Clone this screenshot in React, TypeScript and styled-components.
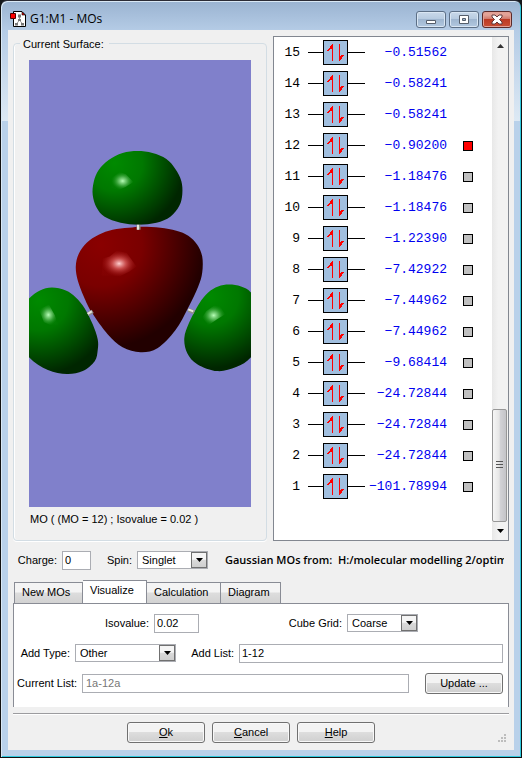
import React from "react";
import styled, { createGlobalStyle, css } from "styled-components";

const GlobalStyle = createGlobalStyle`
  * { box-sizing: border-box; }
  html, body { margin: 0; background: #15181c; }
  body, button, input, select { font: 11px/14px "Liberation Sans", Arial, sans-serif; color: #000; }
`;

const Frame = styled.div`
  display: flex;
  flex-direction: column;
  min-height: 100vh;
  padding: 1px 7px 7px;
  border: 1px solid #111;
  border-top-color: #2b2b35;
  border-radius: 7px 7px 0 0;
  background: linear-gradient(#9ab3d1 0, #b5cce6 30px, #dde9f4 120px, #b9d1ea 120px);
  box-shadow: inset 1px 1px 0 #d9e8f5, inset -1px -1px 0 #2ec9dd;
`;

const TitleBar = styled.header`
  display: flex;
  align-items: center;
  height: 28px;
  padding: 6px 2px 0 2px;
`;

const Title = styled.h1`
  flex: 1;
  margin: 0 0 0 4px;
  font: 12px/16px "Open Sans", "Noto Sans", sans-serif;
`;

const CaptionButtons = styled.div`
  display: flex;
  gap: 3px;
`;

const CaptionButton = styled.button<{ $close?: boolean }>`
  display: grid;
  place-items: center;
  width: 30px;
  height: 17px;
  padding: 0;
  border: 1px solid ${(p) => (p.$close ? "#5b2a2a" : "#5c6f86")};
  border-radius: 3px;
  background: ${(p) =>
    p.$close
      ? "linear-gradient(#e3a398 0 20%, #cf7668 48%, #bc3a24 50%, #c94e35 100%)"
      : "linear-gradient(#c9d9ea, #b6cae0 48%, #9fb6d0 50%, #b2c8e0)"};
  box-shadow: inset 0 0 0 1px ${(p) => (p.$close ? "#e2a196" : "#d9e6f3")};
`;

const Body = styled.main`
  flex: 1;
  display: flex;
  flex-direction: column;
  min-width: 0;
  padding: 6px 5px 7px;
  background: #f0f0f0;
`;

const Panels = styled.div`
  flex: 1;
  display: grid;
  grid-template-columns: 254fr 236fr;
  gap: 6px;
`;

const Group = styled.fieldset`
  display: flex;
  flex-direction: column;
  min-width: 0;
  margin: 0;
  padding: 9px 15px 0;
  border: 1px solid #d3dde4;
  border-radius: 4px;
  box-shadow: inset 1px 0 0 #fff, 0 1px 0 #fff;
`;

const Legend = styled.legend`
  margin-left: -9px;
  padding: 1px 5px 0 3px;
`;

const Viewport = styled.div`
  flex: 1;
  display: flex;
  background: #8080cb;
  svg { flex: 1; width: 100%; }
`;

const Caption = styled.p`
  margin: 0;
  padding: 5px 0 14px 1px;
  white-space: nowrap;
`;

const OrbitalPanel = styled.section`
  display: flex;
  border: 1px solid #828790;
  background: #fff;
`;

const OrbitalList = styled.ul`
  flex: 1;
  margin: 0;
  padding: 0;
  list-style: none;
  font: 13px/31px "Liberation Mono", monospace;
`;

const OrbitalRow = styled.li`
  display: grid;
  grid-template-columns: 26px 65px 82px 25px;
  align-items: center;
  height: 31px;
  text-align: right;
`;

const Level = styled.span`
  display: flex;
  align-items: center;
  margin-left: 8px;
  &::before, &::after { content: ""; flex: 0 0 15px; height: 1px; background: #000; }
  &::after { flex-basis: 17px; }
`;

const SpinBox = styled.span`
  flex: 0 0 25px;
  height: 25px;
  border: 1px solid #000;
  background: #a1bfdf;
  svg { display: block; }
`;

const Energy = styled.span`
  color: #0000f0;
  white-space: nowrap;
`;

const SurfaceMark = styled.button<{ $active: boolean }>`
  width: 10px;
  height: 10px;
  margin-left: 16px;
  padding: 0;
  border: 1px solid #000;
  background: ${(p) => (p.$active ? "#ff0000" : "#c0c0c0")};
`;

const ScrollBar = styled.div`
  display: flex;
  flex-direction: column;
  width: 16px;
  background: linear-gradient(90deg, #e8e8e8, #f2f2f2 40%);
`;

const ScrollButton = styled.button`
  display: grid;
  place-items: center;
  height: 18px;
  padding: 0;
  border: 0;
  background: none;
`;

const ScrollSpace = styled.div`
  flex: 356;
`;

const ScrollThumb = styled.div`
  flex: 111;
  display: grid;
  place-items: center;
  margin-right: 1px;
  border: 1px solid #979797;
  border-radius: 2px;
  background: linear-gradient(90deg, #f6f6f6, #e6e6e6 48%, #d2d2d6 55%, #c4c4c8);
`;

const Line = styled.div<{ $gap?: number }>`
  display: flex;
  align-items: center;
  height: 20px;
  gap: ${(p) => p.$gap ?? 0}px;
`;

const StatusLine = styled(Line)`
  margin-top: 9px;
`;

const Field = styled.div<{ $grow?: boolean }>`
  display: flex;
  align-items: center;
  min-width: 0;
  ${(p) => p.$grow && css`flex: 1;`}
`;

const Label = styled.label<{ $w: number }>`
  flex: 0 0 ${(p) => p.$w}px;
  padding-right: 5px;
  text-align: right;
  white-space: nowrap;
`;

const TextBox = styled.input<{ $w?: number }>`
  ${(p) => (p.$w ? css`width: ${p.$w}px;` : css`flex: 1; min-width: 0;`)}
  height: 19px;
  padding: 0 2px;
  border: 1px solid #abadb3;
  border-radius: 0;
  background: #fff;
  &:disabled { color: #777; padding-left: 3px; }
`;

const SelectBox = styled.div<{ $w: number }>`
  display: flex;
  width: ${(p) => p.$w}px;
  height: 18px;
  border: 1px solid #abadb3;
  background: #fff;
  select {
    flex: 1;
    min-width: 0;
    padding: 0 0 1px 4px;
    border: 0;
    background: none;
    appearance: none;
  }
`;

const DropMark = styled.span`
  display: grid;
  place-items: center;
  width: 16px;
  border: 1px solid #707070;
  background: linear-gradient(#f5f5f5 0 45%, #dadada 50%, #cfcfcf);
  pointer-events: none;
`;

const Source = styled.p`
  flex: 1;
  min-width: 0;
  margin: 0 5px 0 17px;
  overflow: hidden;
  font: 600 11px/18px "Open Sans", "Noto Sans", sans-serif;
  white-space: pre;
`;

const Tabs = styled.div`
  display: flex;
  align-items: flex-end;
  margin: 10px 0 -1px 1px;
`;

const Tab = styled.button<{ $active?: boolean; $w: number }>`
  width: ${(p) => p.$w}px;
  height: 22px;
  padding: 0 0 2px 7px;
  text-align: left;
  border: 1px solid #898c95;
  border-left-width: 0;
  background: linear-gradient(#f4f4f4 0 45%, #dddddd 50%, #d2d2d2);
  &:first-child { border-left-width: 1px; }
  ${(p) =>
    p.$active &&
    css`
      height: 24px;
      padding-bottom: 4px;
      border-bottom-color: #fff;
      background: #fff;
    `}
`;

const TabPane = styled.div`
  display: flex;
  flex-direction: column;
  gap: 10px;
  height: 104px;
  padding: 9px 5px 0 2px;
  border: 1px solid #898c95;
  border-bottom: 0;
  background: #fff;
`;

const Footer = styled.footer`
  display: flex;
  align-items: flex-start;
  gap: 7px;
  margin-top: 6px;
  padding: 8px 0 0 23%;
  border-top: 1px solid #9c9c9f;
  box-shadow: inset 0 1px 0 #fff;
`;

const PushButton = styled.button`
  flex: 0 0 78px;
  height: 21px;
  padding: 0 0 1px;
  border: 1px solid #707070;
  border-radius: 3px;
  background: linear-gradient(#f3f3f3 0 48%, #dddddd 50%, #cfcfcf);
  box-shadow: inset 0 0 0 1px #f8f8f8;
`;

const ResizeGrip = styled.div`
  flex: 1;
  display: flex;
  justify-content: flex-end;
  align-self: flex-end;
  padding-right: 2px;
`;

type Point = [number, number];

/** Closed Catmull-Rom curve through the points, as a cubic Bézier path. */
function blob(points: Point[]): string {
  const n = points.length;
  const at = (i: number) => points[(i + n) % n];
  const parts = points.map((p, i) => {
    const before = at(i - 1);
    const next = at(i + 1);
    const after = at(i + 2);
    return `C${p[0] + (next[0] - before[0]) / 6} ${p[1] + (next[1] - before[1]) / 6} ${
      next[0] - (after[0] - p[0]) / 6
    } ${next[1] - (after[1] - p[1]) / 6} ${next[0]} ${next[1]}`;
  });
  return `M${points[0].join(" ")}${parts.join("")}Z`;
}

const topLobe = blob([[109, 90], [94, 92], [80, 99], [70, 109], [65, 121], [64, 134], [68, 147], [76, 156], [92, 162], [110, 164], [128, 162], [142, 156], [151, 145], [154, 133], [153, 120], [147, 108], [138, 98], [124, 92]]);
const core = blob([[114, 166], [100, 167], [84, 169], [70, 174], [58, 182], [50, 193], [47, 206], [49, 220], [55, 236], [63, 252], [79, 274], [94, 287], [112, 292], [129, 288], [147, 270], [160, 247], [170, 226], [174, 212], [174, 196], [169, 184], [160, 175], [148, 170], [132, 167]]);
const leftLobe = blob([[23, 227], [37, 230], [47, 237], [56, 248], [64, 264], [69, 279], [69, 290], [66, 301], [54, 311], [38, 314], [19, 310], [0, 297], [-12, 275], [-12, 252], [0, 238], [11, 230]]);
const rightLobe = blob([[201, 224], [190, 226], [180, 232], [171, 243], [161, 262], [156, 278], [159, 293], [169, 304], [189, 311], [208, 307], [223, 297], [234, 278], [234, 250], [223, 232], [213, 226]]);

const Shade = ({ id, cx, cy, r, tone }: { id: string; cx: number; cy: number; r: number; tone: string[] }) => (
  <radialGradient id={id} gradientUnits="userSpaceOnUse" cx={cx} cy={cy} r={r}>
    <stop offset="0" stopColor={tone[0]} />
    <stop offset="0.4" stopColor={tone[1]} />
    <stop offset="0.7" stopColor={tone[2]} />
    <stop offset="1" stopColor={tone[3]} />
  </radialGradient>
);

const GREEN = ["#008a00", "#007800", "#004f00", "#002600"];
const RED = ["#8a0000", "#7a0000", "#4e0000", "#220000"];

const Molecule = () => (
  <svg viewBox="0 0 223 446" role="img" aria-label="Molecular orbital surface">
    <defs>
      <Shade id="top" cx={86} cy={102} r={70} tone={GREEN} />
      <Shade id="left" cx={10} cy={240} r={74} tone={GREEN} />
      <Shade id="right" cx={182} cy={236} r={72} tone={GREEN} />
      <Shade id="core" cx={72} cy={184} r={104} tone={RED} />
      <radialGradient id="glint">
        <stop offset="0" stopColor="#b8ffb8" />
        <stop offset="0.4" stopColor="#70c870" stopOpacity="0.8" />
        <stop offset="1" stopColor="#189018" stopOpacity="0.1" />
      </radialGradient>
      <radialGradient id="redGlint">
        <stop offset="0" stopColor="#ffd0d0" />
        <stop offset="0.4" stopColor="#d85c5c" stopOpacity="0.8" />
        <stop offset="1" stopColor="#a01010" stopOpacity="0.1" />
      </radialGradient>
    </defs>
    <path d={topLobe} fill="url(#top)" />
    <path d="M83 117 91 111 97 113 105 121 97 126 90 129 83 127Z" fill="url(#glint)" />
    <path d={core} fill="url(#core)" />
    <path d="M74 198 81 196 88 190 98 192 108 206 101 211 91 216 82 215 73 215Z" fill="url(#redGlint)" />
    <path d="M110 164V169" stroke="#8c8c84" strokeWidth="4" />
    <path d="M109.500 164V169" stroke="#e6e6de" strokeWidth="2" />
    <path d={leftLobe} fill="url(#left)" />
    <path d="M10 249 20 244 26 255 29 264 22 265 15 262Z" fill="url(#glint)" />
    <path d={rightLobe} fill="url(#right)" />
    <path d="M178 251 186 245 192 246 197 254 189 259 180 265 174 257Z" fill="url(#glint)" />
    <path d="M59 254 64 251M160 249.500 166 252" stroke="#8f8f8a" strokeWidth="4" />
    <path d="M59 253.500 63 251M160 249 165 251" stroke="#e6e6de" strokeWidth="2" />
  </svg>
);

const AppIcon = () => (
  <svg width="16" height="16" viewBox="0 0 16 16" aria-hidden="true">
    <path d="M3.500.5H12L15.500 4V15.500H3.500Z" fill="#fff" stroke="#000" />
    <path d="M12 1V4H15Z" fill="#e00" stroke="#000" strokeWidth=".6" />
    <path d="M9.500 5V9L6.500 13M9.500 9L12.500 13" fill="none" stroke="#999" />
    <path d="M8 3.500h3v3H8ZM8 8h3v2H8ZM5 12h3v2.500H5ZM11 12h3v2.500h-3Z" fill="#777" />
    <path d="M.5 2.500h5v5h-5Z" fill="#f00" stroke="#500" />
  </svg>
);

const SpinPair = () => (
  <svg width="23" height="23" viewBox="0 0 23 23" shapeRendering="crispEdges" aria-hidden="true">
    <path d="M8 3h1v17H8V8H6v1H5v1H3V9h1V8h1V7h1V5h1V4h1Z" fill="#f00" />
    <path d="M15 3h1v12h1v-1h3v1h-1v1h-1v2h-1v1h-1v1h-1Z" fill="#f00" />
  </svg>
);

const Triangle = ({ up }: { up?: boolean }) => (
  <svg width="7" height="4" viewBox="0 0 7 4" aria-hidden="true">
    <path d={up ? "M0 4 3.500 0 7 4Z" : "M0 0H7L3.500 4Z"} fill={up ? "#333" : "#000"} />
  </svg>
);

const energies = [
  "0.51562", "0.58241", "0.58241", "0.90200", "1.18476", "1.18476", "1.22390", "7.42922",
  "7.44962", "7.44962", "9.68414", "24.72844", "24.72844", "24.72844", "101.78994",
];
const orbitals = energies.map((energy, i) => ({ n: 15 - i, energy: `−${energy}` }));

interface PickerProps {
  id: string;
  value: string;
  width: number;
}

const Picker = ({ id, value, width }: PickerProps) => (
  <SelectBox $w={width}>
    <select id={id} defaultValue={value}>
      <option>{value}</option>
    </select>
    <DropMark><Triangle /></DropMark>
  </SelectBox>
);

export default function App() {
  return (
    <>
      <GlobalStyle />
      <Frame>
        <TitleBar>
          <AppIcon />
          <Title>G1:M1 - MOs</Title>
          <CaptionButtons>
            <CaptionButton aria-label="Minimize">
              <svg width="12" height="13"><path d="M1.500 7.500h9v3h-9Z" fill="#fff" stroke="#555e6b" /></svg>
            </CaptionButton>
            <CaptionButton aria-label="Maximize">
              <svg width="12" height="11"><path d="M1.500 1.500h9v8h-9ZM4.500 4.500v2h3v-2Z" fill="#fff" fillRule="evenodd" stroke="#555e6b" /></svg>
            </CaptionButton>
            <CaptionButton $close aria-label="Close">
              <svg width="12" height="11" viewBox="0 0 12 11">
                <path d="M1 1H4L6 3 8 1h3v2L8.500 5.500 11 8v2H8L6 8 4 10H1V8L3.500 5.500 1 3Z" fill="#fff" stroke="#61383a" />
              </svg>
            </CaptionButton>
          </CaptionButtons>
        </TitleBar>
        <Body>
          <Panels>
            <Group>
              <Legend>Current Surface:</Legend>
              <Viewport><Molecule /></Viewport>
              <Caption>MO ( (MO = 12) ; Isovalue = 0.02 )</Caption>
            </Group>
            <OrbitalPanel aria-label="Orbitals">
              <OrbitalList>
                {orbitals.map(({ n, energy }) => (
                  <OrbitalRow key={n}>
                    <span>{n}</span>
                    <Level>
                      <SpinBox><SpinPair /></SpinBox>
                    </Level>
                    <Energy>{energy}</Energy>
                    {n <= 12 && <SurfaceMark $active={n === 12} aria-label={`Surface of orbital ${n}`} />}
                  </OrbitalRow>
                ))}
              </OrbitalList>
              <ScrollBar>
                <ScrollButton aria-label="Scroll up"><Triangle up /></ScrollButton>
                <ScrollSpace />
                <ScrollThumb>
                  <svg width="7" height="9"><path d="M0 .5h7M0 3.500h7M0 6.500h7" stroke="#555" /></svg>
                </ScrollThumb>
                <ScrollButton aria-label="Scroll down"><Triangle /></ScrollButton>
              </ScrollBar>
            </OrbitalPanel>
          </Panels>

          <StatusLine>
            <Field>
              <Label $w={49} htmlFor="charge">Charge:</Label>
              <TextBox id="charge" $w={29} defaultValue="0" />
            </Field>
            <Field>
              <Label $w={46} htmlFor="spin">Spin:</Label>
              <Picker id="spin" value="Singlet" width={71} />
            </Field>
            <Source>{"Gaussian MOs from:  H:/molecular modelling 2/optim"}</Source>
          </StatusLine>

          <Tabs role="tablist">
            <Tab role="tab" $w={69}>New MOs</Tab>
            <Tab role="tab" $w={64} $active aria-selected>Visualize</Tab>
            <Tab role="tab" $w={74}>Calculation</Tab>
            <Tab role="tab" $w={60}>Diagram</Tab>
          </Tabs>
          <TabPane role="tabpanel">
            <Line>
              <Field>
                <Label $w={138} htmlFor="isovalue">Isovalue:</Label>
                <TextBox id="isovalue" $w={45} defaultValue="0.02" />
              </Field>
              <Field>
                <Label $w={148} htmlFor="grid">Cube Grid:</Label>
                <Picker id="grid" value="Coarse" width={71} />
              </Field>
            </Line>
            <Line>
              <Field>
                <Label $w={59} htmlFor="type">Add Type:</Label>
                <Picker id="type" value="Other" width={101} />
              </Field>
              <Field $grow>
                <Label $w={63} htmlFor="list">Add List:</Label>
                <TextBox id="list" defaultValue="1-12" />
              </Field>
            </Line>
            <Line $gap={16}>
              <Field $grow>
                <Label $w={66} htmlFor="current">Current List:</Label>
                <TextBox id="current" defaultValue="1a-12a" disabled />
              </Field>
              <PushButton>Update ...</PushButton>
            </Line>
          </TabPane>

          <Footer>
            <PushButton><u>O</u>k</PushButton>
            <PushButton><u>C</u>ancel</PushButton>
            <PushButton><u>H</u>elp</PushButton>
            <ResizeGrip>
              <svg width="9" height="9" aria-hidden="true">
                <path d="M6 0h2v2H6ZM3 3h2v2H3ZM6 3h2v2H6ZM0 6h2v2H0ZM3 6h2v2H3ZM6 6h2v2H6Z" fill="#bdbdbd" />
              </svg>
            </ResizeGrip>
          </Footer>
        </Body>
      </Frame>
    </>
  );
}
